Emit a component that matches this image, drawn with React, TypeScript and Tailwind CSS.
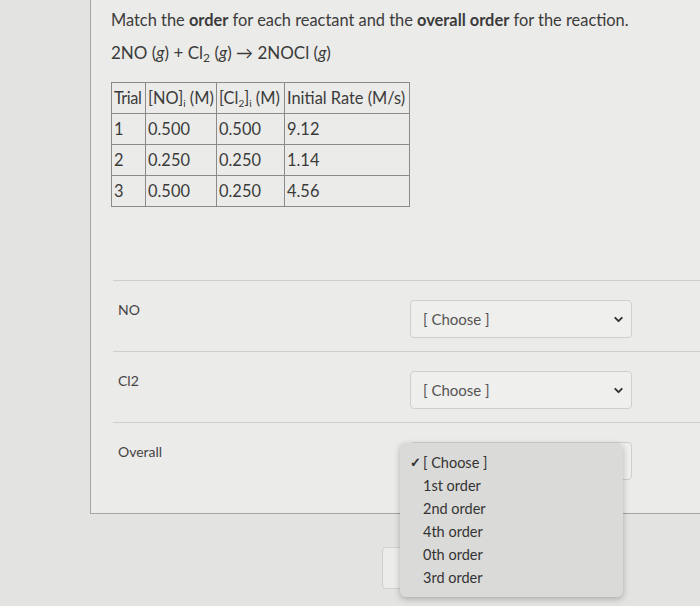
import { ChevronDown } from "lucide-react";

const rows = [
  ["1", "0.500", "0.500", "9.12"],
  ["2", "0.250", "0.250", "1.14"],
  ["3", "0.500", "0.250", "4.56"],
];

const options = ["1st order", "2nd order", "4th order", "0th order", "3rd order"];

function Select({ hidden }: { hidden?: boolean }) {
  return (
    <div className="flex h-[38px] w-[222px] items-center justify-between rounded-[4px] border border-[#cfcfcd] bg-[#efefed] pl-[12px] pr-[6px] text-[15px] text-[#555]">
      <span>{hidden ? "" : "[ Choose ]"}</span>
      <ChevronDown size={13} strokeWidth={3.5} className="text-[#333]" />
    </div>
  );
}

function Row({ label, last, children }: { label: string; last?: boolean; children?: React.ReactNode }) {
  return (
    <div className={`relative flex border-t border-[#cfcfcd] pt-[20px] pl-[5px] ${last ? "h-[92px]" : "h-[71px]"}`}>
      <span className="w-[292px] text-[14px] leading-[18px] text-[#444]">{label}</span>
      <div className="-mt-[1px]">
        <Select hidden={last} />
      </div>
      {children}
    </div>
  );
}

export default function App() {
  const cell = "border border-[#8a8a8a] px-[2px] text-left font-normal whitespace-nowrap";
  return (
    <div className="relative h-[606px] w-[700px] overflow-hidden bg-[#e3e3e1] font-['Lato','Open_Sans',sans-serif] text-[#3b3b3b]">
      <div className="ml-[90px] h-[514px] border-b border-l border-[#a5a5a3] bg-[#ebebe9] pl-[20px] pt-[8px]">
        <p className="text-[16.4px] leading-[24px]">
          Match the <b>order</b> for each reactant and the <b>overall order</b> for the reaction.
        </p>
        <p className="mt-[9px] text-[17px] leading-[24px]">
          2NO (<i>g</i>) + Cl<sub className="text-[12px]">2</sub> (<i>g</i>) → 2NOCl (<i>g</i>)
        </p>
        <table className="mt-[17px] table-fixed border-collapse text-[16.4px] leading-[30px]">
          <thead>
            <tr>
              <th className={`${cell} w-[34px] tracking-[-0.5px]`}>Trial</th>
              <th className={`${cell} w-[71px]`}>
                [NO]<sub className="text-[10px]">i</sub> (M)
              </th>
              <th className={`${cell} w-[68px]`}>
                [Cl<sub className="text-[10px]">2</sub>]<sub className="text-[10px]">i</sub> (M)
              </th>
              <th className={`${cell} w-[125px]`}>Initial Rate (M/s)</th>
            </tr>
          </thead>
          <tbody>
            {rows.map((r) => (
              <tr key={r[0]}>
                {r.map((v, i) => (
                  <td key={i} className={cell}>
                    {v}
                  </td>
                ))}
              </tr>
            ))}
          </tbody>
        </table>
        <div className="mt-[73px] ml-[2px]">
          <Row label="NO" />
          <Row label="Cl2" />
          <Row label="Overall" last>
            <div className="absolute left-[287px] top-[20px] z-10 w-[223px] rounded-[6px] bg-[#dadad8] py-[8px] text-[14.5px] leading-[23px] text-[#333] shadow-[0_2px_6px_rgba(0,0,0,0.25)]">
              <div className="flex items-center pl-[10px]">
                <span className="w-[13px] text-[13px] font-bold">✓</span>
                <span>[ Choose ]</span>
              </div>
              {options.map((o) => (
                <div key={o} className="pl-[23px]">
                  {o}
                </div>
              ))}
            </div>
          </Row>
        </div>
      </div>
      <div className="ml-[382px] mt-[33px] h-[42px] w-[240px] rounded-[4px] border border-[#cfcfcd] bg-[#ececea]" />
    </div>
  );
}
